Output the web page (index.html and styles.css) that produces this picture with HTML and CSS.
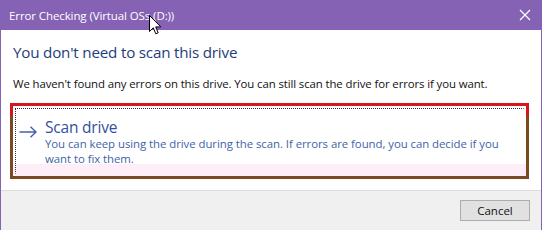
FILE: index.html
```html
<!DOCTYPE html>
<html>
<head>
<meta charset="utf-8">
<link rel="stylesheet" href="styles.css">
</head>
<body>
<div class="window">
  <div class="titlebar">
    <span class="title">Error Checking (Virtual OSs (D:))</span>
    <svg class="close" width="12" height="12" viewBox="0 0 12 12"><path d="M1 1L11 11M11 1L1 11" stroke="#fff" stroke-width="1.2" fill="none"/></svg>
  </div>
  <div class="content">
    <h1 class="heading">You don't need to scan this drive</h1>
    <p class="message">We haven't found any errors on this drive. You can still scan the drive for errors if you want.</p>
    <div class="frame">
      <div class="option">
        <div class="focus">
          <svg class="arrow" width="18" height="12" viewBox="0 0 18 12"><path d="M0.5 6H17M11.5 0.8L17 6L11.5 11.2" stroke="#4560ad" stroke-width="1.4" fill="none"/></svg>
          <div class="option-text">
            <div class="option-title">Scan drive</div>
            <div class="option-desc">You can keep using the drive during the scan. If errors are found, you can decide if you want to fix them.</div>
          </div>
        </div>
      </div>
    </div>
  </div>
  <div class="footer">
    <button class="btn">Cancel</button>
  </div>
</div>
<svg class="cursor" width="13" height="21" viewBox="0 0 13 21"><path d="M0.5 0.5V16.5L4.3 12.8L6.8 18.8L9.2 17.8L6.7 11.9H11.8Z" fill="#fff" stroke="#000" stroke-width="1"/></svg>
</body>
</html>
```
FILE: styles.css
```css
html, body {
  margin: 0;
  padding: 0;
  background: #fff;
}
body {
  width: 542px;
  height: 230px;
  overflow: hidden;
  position: relative;
  font-family: "Open Sans", "Noto Sans", sans-serif;
}
.window {
  width: 542px;
  height: 230px;
  box-sizing: border-box;
  border-left: 1px solid #8562b4;
  border-right: 1px solid #8562b4;
  display: flex;
  flex-direction: column;
}
.titlebar {
  height: 30px;
  margin: 0 -1px;
  background: #8562b4;
  display: flex;
  align-items: center;
  justify-content: space-between;
  padding: 0 11px 0 9px;
}
.title {
  color: #fff;
  font-size: 11.5px;
  letter-spacing: -0.1px;
}
.close {
  display: block;
}
.content {
  padding: 0 11px 0 9px;
  flex: 1;
}
.heading {
  margin: 12px 0 0 3px;
  font-size: 15.2px;
  font-weight: normal;
  color: #1e3d7a;
  line-height: 20px;
  letter-spacing: -0.2px;
}
.message {
  margin: 14px 0 0 3px;
  font-size: 11.4px;
  line-height: 15px;
  color: #111;
  letter-spacing: -0.1px;
}
.frame {
  margin-top: 12px;
  width: 519px;
  box-sizing: border-box;
  padding: 3px;
  background: linear-gradient(#d8141e 0 13px, #7a4a22 13px);
}
.option {
  background: linear-gradient(#fff 0 58px, #fdeef8 58px);
  padding: 2px;
}
.focus {
  border: 1px dotted #333;
  border-right-color: transparent;
  border-bottom-color: transparent;
  display: flex;
  padding: 8px 0 7px 3px;
}
.arrow {
  margin-top: 9px;
  flex: none;
}
.option-text {
  margin-left: 8px;
}
.option-title {
  font-size: 15.5px;
  line-height: 20px;
  color: #3350a0;
  letter-spacing: -0.2px;
}
.option-desc {
  font-size: 11.4px;
  line-height: 14.5px;
  color: #3e63a8;
  width: 462px;
  letter-spacing: -0.05px;
}
.footer {
  height: 40px;
  border-top: 1px solid #dcdcdc;
  background: #f0f0f0;
  display: flex;
  justify-content: flex-end;
  align-items: flex-start;
  padding: 9px 11px 0 0;
  box-sizing: border-box;
}
.btn {
  width: 70px;
  height: 21px;
  border: 1px solid #adadad;
  background: #e1e1e1;
  font-family: "Open Sans", "Noto Sans", sans-serif;
  font-size: 11.5px;
  color: #111;
  padding: 0;
}
.cursor {
  position: absolute;
  left: 149px;
  top: 15px;
}
```
